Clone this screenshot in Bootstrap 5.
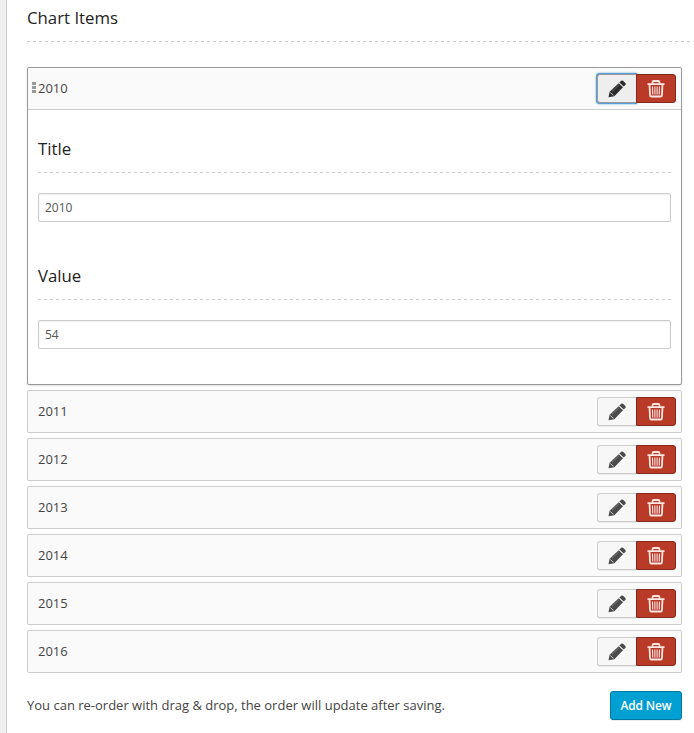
<!DOCTYPE html>
<html lang="en">
<head>
<meta charset="utf-8">
<meta name="viewport" content="width=device-width, initial-scale=1">
<title>Chart Items</title>
<link href="https://cdn.jsdelivr.net/npm/bootstrap@5.3.0/dist/css/bootstrap.min.css" rel="stylesheet">
<style>
body{font:13px/20px "Open Sans",sans-serif;color:#444;background:#f0f0f0;overflow:hidden}
.panel-page{margin-left:6px;border-left:1px solid #ccc;padding-left:20px;height:733px}
.rule-title{font-size:16.8px;line-height:24px;font-weight:400;color:#222;margin:0;
  background:repeating-linear-gradient(90deg,#ccc 0 3px,transparent 3px 6px) left bottom/100% 1px no-repeat}
.main-title{padding:6px 0 12px;height:42px}
.field-title{height:36px}
.items{margin:25px 12px 0 0;gap:5px}
.chart-item{border:1px solid #ccc;border-radius:2px;background:#fff}
.chart-item.open{border-color:#999;height:318px;box-shadow:0 1px 2px rgba(0,0,0,.12)}
.item-head{height:41px;background:#fafafa;padding:0 5px 1px 10px;border-radius:2px}
.open .item-head{height:42px;border-bottom:1px solid #ccc;border-radius:2px 2px 0 0;padding-left:4px}
.grip{width:4px;height:12px;margin-right:2px;fill:#999}
.open .item-body{padding:27px 10px 0}
.field{height:127px}
.field .form-control{margin-top:20px;height:29px;padding:0 6px;font-size:12px;color:#555;border:1px solid #ccc;border-radius:2px;box-shadow:inset 0 1px 2px rgba(0,0,0,.07)}
.tool{width:40px;height:29px;padding:1px 0 0;border-radius:3px;line-height:1;display:flex;align-items:center;justify-content:center}
.tool svg{width:18px;height:18px;display:block}
.tool-edit{width:39px;background:#f7f7f7;border:1px solid #ccc;border-right:0;border-radius:3px 0 0 3px;color:#4a4a4a;box-shadow:0 1px 0 rgba(0,0,0,.06)}
.open .tool-edit{background:#eee;border-color:#999;color:#2c2c2c;box-shadow:0 0 0 1px #5b9dd9,0 0 2px 1px rgba(30,140,190,.8)}
.tool-del{background:#b93a27;border:1px solid #832518;border-radius:0 3px 3px 0;color:#fbe5e1;position:relative}
.foot{margin:18px 12px 0 0}
.foot span{padding-bottom:2px}
.btn-add{background:#00a0d2;border:1px solid #0079a5;border-radius:3px;color:#fff;font-size:12px;font-weight:600;letter-spacing:-.15px;width:72px;height:29px;padding:0;line-height:27px;box-shadow:0 1px 0 rgba(0,0,0,.08)}
</style>
<script src="https://cdn.jsdelivr.net/npm/bootstrap@5.3.0/dist/js/bootstrap.bundle.min.js"></script>
</head>
<body>
<svg class="d-none" xmlns="http://www.w3.org/2000/svg">
  <symbol id="pencil" viewBox="0 0 18 18">
    <path fill="currentColor" d="M11.400 2.600 13.200.8Q14.100 0 15 .8L17.300 3Q18.200 4 17.300 4.900L15.700 6.600ZM10.700 3.300 15 7.300 6.300 16.200.500 17.300 1.600 11.800Z"/>
    <path fill="none" stroke="#f4f4f4" stroke-width="1" d="M2.400 12.500 5.500 15.500" opacity=".8"/>
    <path fill="none" stroke="#fff" stroke-width=".7" d="M4 11.500 11 4.700" opacity=".35"/>
  </symbol>
  <symbol id="trash" viewBox="0 0 18 18">
    <path fill="none" stroke="currentColor" stroke-width="1.800" d="M.500 4.100H17.500M5.500 4V2.300Q5.500 1 6.800 1H11.200Q12.500 1 12.500 2.300V4M2.500 4.500 3.100 15.400Q3.200 16.500 4.400 16.500H13.600Q14.800 16.500 14.900 15.400L15.500 4.500"/>
    <path fill="none" stroke="currentColor" stroke-width="1.100" d="M5.500 6.500 5.800 14.500M7.900 6.500V14.500M10.100 6.500V14.500M12.500 6.500 12.200 14.500"/>
  </symbol>
</svg>
<main class="panel-page bg-white">
  <h2 class="rule-title main-title">Chart Items</h2>
  <div class="items d-flex flex-column">
    <section class="chart-item open">
      <div class="item-head d-flex align-items-center">
        <svg class="grip flex-shrink-0" viewBox="0 0 4 12"><path d="M0 0h4v3H0zM0 4h4v3H0zM0 8h4v3H0z"/></svg>
        <span>2010</span>
        <div class="d-flex ms-auto"><button class="btn tool tool-edit" aria-label="Edit"><svg><use href="#pencil"/></svg></button><button class="btn tool tool-del" aria-label="Delete"><svg><use href="#trash"/></svg></button></div>
      </div>
      <div class="item-body">
        <div class="field"><h3 class="rule-title field-title">Title</h3><input class="form-control" aria-label="Title" value="2010"></div>
        <div class="field"><h3 class="rule-title field-title">Value</h3><input class="form-control" aria-label="Value" value="54"></div>
      </div>
    </section>
    <section class="chart-item"><div class="item-head d-flex align-items-center"><span>2011</span><div class="d-flex ms-auto"><button class="btn tool tool-edit" aria-label="Edit"><svg><use href="#pencil"/></svg></button><button class="btn tool tool-del" aria-label="Delete"><svg><use href="#trash"/></svg></button></div></div></section>
    <section class="chart-item"><div class="item-head d-flex align-items-center"><span>2012</span><div class="d-flex ms-auto"><button class="btn tool tool-edit" aria-label="Edit"><svg><use href="#pencil"/></svg></button><button class="btn tool tool-del" aria-label="Delete"><svg><use href="#trash"/></svg></button></div></div></section>
    <section class="chart-item"><div class="item-head d-flex align-items-center"><span>2013</span><div class="d-flex ms-auto"><button class="btn tool tool-edit" aria-label="Edit"><svg><use href="#pencil"/></svg></button><button class="btn tool tool-del" aria-label="Delete"><svg><use href="#trash"/></svg></button></div></div></section>
    <section class="chart-item"><div class="item-head d-flex align-items-center"><span>2014</span><div class="d-flex ms-auto"><button class="btn tool tool-edit" aria-label="Edit"><svg><use href="#pencil"/></svg></button><button class="btn tool tool-del" aria-label="Delete"><svg><use href="#trash"/></svg></button></div></div></section>
    <section class="chart-item"><div class="item-head d-flex align-items-center"><span>2015</span><div class="d-flex ms-auto"><button class="btn tool tool-edit" aria-label="Edit"><svg><use href="#pencil"/></svg></button><button class="btn tool tool-del" aria-label="Delete"><svg><use href="#trash"/></svg></button></div></div></section>
    <section class="chart-item"><div class="item-head d-flex align-items-center"><span>2016</span><div class="d-flex ms-auto"><button class="btn tool tool-edit" aria-label="Edit"><svg><use href="#pencil"/></svg></button><button class="btn tool tool-del" aria-label="Delete"><svg><use href="#trash"/></svg></button></div></div></section>
  </div>
  <div class="foot d-flex align-items-center justify-content-between">
    <span>You can re-order with drag &amp; drop, the order will update after saving.</span>
    <button class="btn btn-add">Add New</button>
  </div>
</main>
</body>
</html>
